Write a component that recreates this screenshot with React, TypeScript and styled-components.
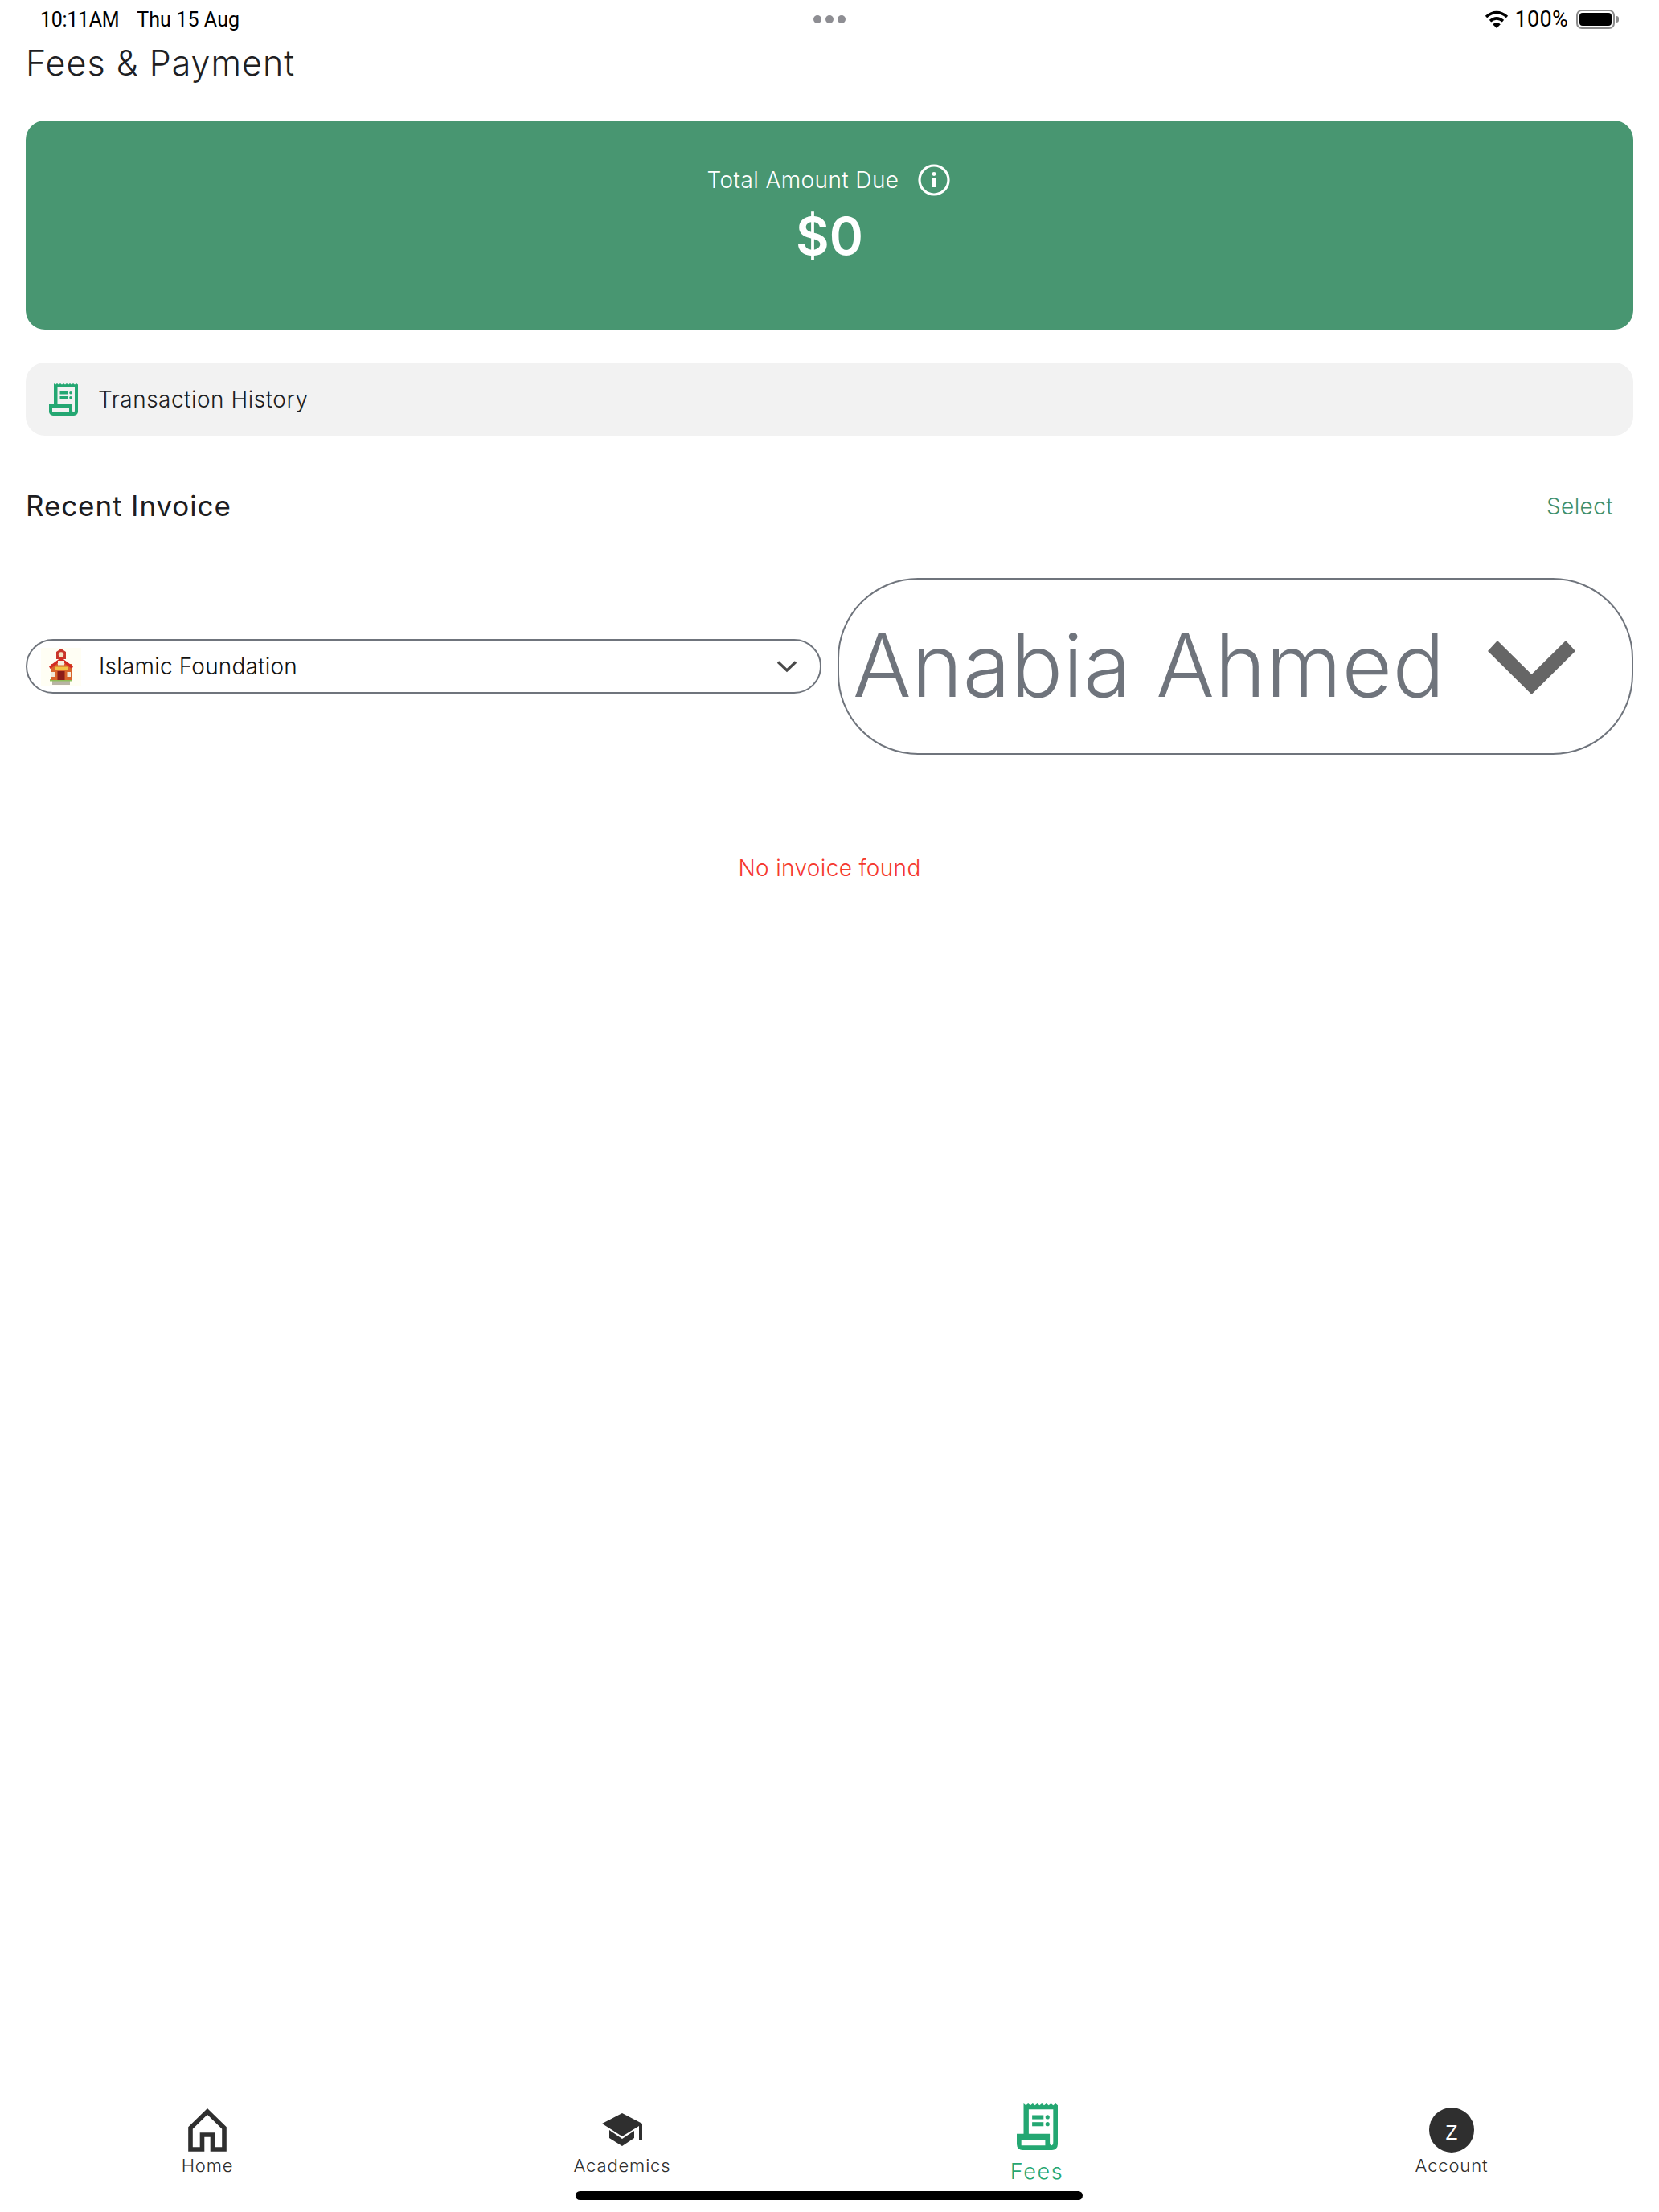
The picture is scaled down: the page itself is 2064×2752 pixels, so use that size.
import React from "react";
import styled, { createGlobalStyle } from "styled-components";

const FONT = `Inter, "Noto Sans", "Liberation Sans", sans-serif`;

const Global = createGlobalStyle`
  html, body { margin: 0; padding: 0; background: #fff; }
  * { box-sizing: border-box; }
`;

const Page = styled.div`
  width: 2064px;
  height: 2752px;
  position: relative;
  display: flex;
  flex-direction: column;
  font-family: ${FONT};
  background: #fff;
  overflow: hidden;
`;

const StatusBar = styled.div`
  height: 48px;
  display: grid;
  grid-template-columns: 1fr auto 1fr;
  align-items: center;
  padding: 0 50px;
  font-family: Roboto, ${FONT};
  font-size: 25px;
  color: #000;
`;
const StatusLeft = styled.div`
  display: flex;
  gap: 22px;
  letter-spacing: 0.1px;
`;
const Clock = styled.span`
  word-spacing: -6px;
  letter-spacing: -0.3px;
`;
const StatusDots = styled.div`
  display: flex;
  gap: 5px;
`;
const Dot = styled.span`
  width: 10px;
  height: 10px;
  border-radius: 50%;
  background: #8e8e93;
`;
const StatusRight = styled.div`
  display: flex;
  justify-content: flex-end;
  align-items: center;
  gap: 8px;
  padding-right: 5px;
`;
const Percent = styled.span`
  font-size: 27px;
  letter-spacing: 0.3px;
`;
const Battery = styled.span`
  width: 48px;
  height: 24px;
  border: 2px solid #8b8b8b;
  border-radius: 7px;
  padding: 2px;
  display: flex;
  margin-left: 2px;
  position: relative;
  &::before {
    content: "";
    flex: 1;
    background: #000;
    border-radius: 4px;
  }
  &::after {
    content: "";
    position: absolute;
    right: -7px;
    top: 6px;
    width: 3px;
    height: 8px;
    background: #8b8b8b;
    border-radius: 0 3px 3px 0;
  }
`;

const Content = styled.main`
  flex: 1;
  display: flex;
  flex-direction: column;
  padding: 0 32px;
`;
const Title = styled.h1`
  margin: 5px 0 0;
  height: 50px;
  line-height: 50px;
  font-size: 43px;
  font-weight: 300;
  letter-spacing: 1px;
  color: #1f1f24;
`;
const Banner = styled.section`
  margin-top: 47px;
  height: 260px;
  border-radius: 24px;
  background: #489671;
  color: #fff;
  display: flex;
  flex-direction: column;
  align-items: center;
  padding-top: 54px;
`;
const BannerRow = styled.div`
  display: flex;
  align-items: center;
  gap: 24px;
  height: 40px;
  margin-left: -2px;
  font-size: 28px;
  font-weight: 300;
  letter-spacing: 0.4px;
`;
const Amount = styled.div`
  margin-top: 15px;
  line-height: 70px;
  font-size: 64px;
  font-weight: 600;
`;
const HistoryRow = styled.div`
  margin-top: 41px;
  height: 91px;
  border-radius: 24px;
  background: #f2f2f2;
  display: flex;
  align-items: center;
  gap: 25px;
  padding-left: 29px;
  font-size: 28px;
  font-weight: 300;
  letter-spacing: 0.5px;
  color: #1d1d22;
`;
const SectionHead = styled.div`
  margin-top: 60px;
  height: 54px;
  display: flex;
  align-items: center;
  justify-content: space-between;
  padding-right: 25px;
`;
const SectionTitle = styled.h2`
  margin: 0;
  font-size: 35px;
  font-weight: 400;
  letter-spacing: 0.9px;
  color: #1d1d22;
`;
const SelectLink = styled.span`
  margin-top: 2px;
  font-size: 28px;
  font-weight: 300;
  letter-spacing: 0.4px;
  color: #3f8f6c;
`;
const Filters = styled.div`
  margin-top: 63px;
  display: grid;
  grid-template-columns: 990px 990px;
  gap: 20px;
  align-items: center;
`;
const SmallSelect = styled.div`
  height: 68px;
  border: 2px solid #6f747c;
  border-radius: 34px;
  display: flex;
  align-items: center;
  padding: 0 28px 0 17px;
  gap: 22px;
  font-size: 28px;
  font-weight: 300;
  letter-spacing: 0.2px;
  color: #111;
`;
const SelectText = styled.span`
  flex: 1;
`;
const BigSelect = styled.div`
  height: 220px;
  border: 2px solid #6f747c;
  border-radius: 100px;
  display: flex;
  align-items: center;
  padding: 0 70px 3px 17px;
  justify-content: space-between;
  font-size: 108px;
  font-weight: 300;
  letter-spacing: 0.25px;
  color: #6f747c;
`;
const BigChevronWrap = styled.span`
  display: flex;
  margin-top: 5px;
`;
const Empty = styled.p`
  margin: 123px 0 0;
  text-align: center;
  line-height: 36px;
  font-size: 28px;
  font-weight: 300;
  letter-spacing: 0.35px;
  color: #f5392f;
`;

const TabBar = styled.nav`
  height: 137px;
  display: grid;
  grid-template-columns: repeat(4, 516px);
`;
const Tab = styled.div`
  display: flex;
  flex-direction: column;
  align-items: center;
`;
const IconSlot = styled.div<{ $active?: boolean }>`
  height: ${(p) => (p.$active ? 62 : 70)}px;
  display: flex;
  align-items: center;
  justify-content: center;
`;
const TabLabel = styled.span<{ $active?: boolean }>`
  margin-top: ${(p) => (p.$active ? 10 : 0)}px;
  line-height: ${(p) => (p.$active ? 30 : 18)}px;
  font-size: ${(p) => (p.$active ? 27 : 22)}px;
  font-weight: 300;
  letter-spacing: ${(p) => (p.$active ? 1.6 : 0.85)}px;
  color: ${(p) => (p.$active ? "#24a772" : "#2d2d2d")};
`;
const Avatar = styled.div`
  width: 56px;
  height: 56px;
  border-radius: 50%;
  background: #2f2f2f;
  color: #fff;
  font-size: 32px;
  font-weight: 300;
  display: flex;
  align-items: center;
  justify-content: center;
`;
const HomeIndicator = styled.div`
  position: absolute;
  left: 716px;
  top: 2726px;
  width: 631px;
  height: 11px;
  border-radius: 6px;
  background: #000;
`;

const Receipt = ({ w, h }: { w: number; h: number }) => (
  <svg width={w} height={h} viewBox="0 0 36 40" preserveAspectRatio="none">
    <path
      fill="#24a772"
      fillRule="evenodd"
      d="M6 0 L8 1.6 L10 0 L12 1.6 L14 0 L16 1.6 L18 0 L20 1.6 L22 0 L24 1.6 L26 0 L28 1.6 L30 0 L32 1.6 L34 0 L36 1.6 V35 A5 5 0 0 1 31 40 H5 A5 5 0 0 1 0 35 V26 H6 Z
         M10.5 5 V26 H29 V33 Q29 36 30.5 36 Q32 36 32 33 V5 Z
         M4 31 V36 H25 V31 Z"
    />
    <rect x="13.5" y="10" width="10" height="3.5" fill="#24a772" />
    <rect x="13.5" y="16" width="10" height="3.5" fill="#24a772" />
    <circle cx="27" cy="11.7" r="1.8" fill="#24a772" />
    <circle cx="27" cy="17.7" r="1.8" fill="#24a772" />
  </svg>
);

const Wifi = () => (
  <svg width="30" height="22" viewBox="0 0 30 22">
    <path d="M2 8 Q15 -3 28 8" fill="none" stroke="#000" strokeWidth="3.6" />
    <path d="M7 13.2 Q15 6.5 23 13.2" fill="none" stroke="#000" strokeWidth="3.6" />
    <path d="M10.2 17.2 Q15 13 19.8 17.2 L15 22 Z" fill="#000" />
  </svg>
);

const Info = () => (
  <svg width="40" height="40" viewBox="0 0 40 40">
    <circle cx="20" cy="20" r="18" fill="none" stroke="#fff" strokeWidth="3.2" />
    <rect x="18" y="17" width="4" height="12" fill="#fff" />
    <circle cx="20" cy="12.5" r="2.4" fill="#fff" />
  </svg>
);

const School = () => (
  <svg width="50" height="47" viewBox="0 0 50 47">
    <rect width="50" height="47" fill="#fffef4" />
    <rect x="14" y="41" width="22" height="5" fill="#b9b4a6" />
    <rect x="11" y="39" width="28" height="2.5" fill="#8fbf5a" />
    <rect x="12" y="20" width="26" height="20" fill="#d9642b" />
    <path d="M19 5 L25 1 L31 5 V14 H19 Z" fill="#c9352a" />
    <circle cx="25" cy="8.5" r="3.2" fill="#f3e5c5" />
    <path d="M25 12 L10 23 L11.5 26 L25 16.5 L38.5 26 L40 23 Z" fill="#d22b22" />
    <rect x="21" y="16" width="8" height="5.5" fill="#f5eedd" />
    <rect x="17" y="23.5" width="16" height="3.5" fill="#f1c447" />
    <rect x="20.5" y="29" width="9" height="11" fill="#8c1d18" />
    <rect x="13" y="30" width="4.5" height="6" fill="#f2e9d8" />
    <rect x="32.5" y="30" width="4.5" height="6" fill="#f2e9d8" />
  </svg>
);

const SmallChevron = () => (
  <svg width="26" height="16" viewBox="0 0 26 16">
    <path d="M2 2.5 L13 13 L24 2.5" fill="none" stroke="#4a4a4a" strokeWidth="3.4" />
  </svg>
);

const BigChevron = () => (
  <svg width="109" height="67" viewBox="0 0 109 67">
    <path d="M0 13 L12 0 L54.5 42 L97 0 L109 13 L54.5 67 Z" fill="#666" />
  </svg>
);

const HomeIcon = () => (
  <svg width="48" height="54" viewBox="0 0 48 54">
    <path
      d="M3 51 V24.5 L24 4 L45 24.5 V51 H30.5 V33 H17.5 V51 Z"
      fill="none"
      stroke="#2f2f2f"
      strokeWidth="5.6"
      strokeLinejoin="miter"
    />
  </svg>
);

const CapIcon = () => (
  <svg width="51" height="42" viewBox="0 0 51 42">
    <path d="M0 13 L25 0 L50 13 V33 H46 V16 L25 29 Z" fill="#2f2f2f" />
    <path d="M9 21 L25 32 L40 22 V31 L25 41 L9 31 Z" fill="#2f2f2f" />
  </svg>
);

export default function App() {
  return (
    <Page>
      <Global />
      <StatusBar>
        <StatusLeft>
          <Clock>10:11 AM</Clock>
          <span>Thu 15 Aug</span>
        </StatusLeft>
        <StatusDots>
          <Dot />
          <Dot />
          <Dot />
        </StatusDots>
        <StatusRight>
          <Wifi />
          <Percent>100%</Percent>
          <Battery />
        </StatusRight>
      </StatusBar>
      <Content>
        <Title>Fees &amp; Payment</Title>
        <Banner>
          <BannerRow>
            <span>Total Amount Due</span>
            <Info />
          </BannerRow>
          <Amount>$0</Amount>
        </Banner>
        <HistoryRow>
          <Receipt w={36} h={40} />
          <span>Transaction History</span>
        </HistoryRow>
        <SectionHead>
          <SectionTitle>Recent Invoice</SectionTitle>
          <SelectLink>Select</SelectLink>
        </SectionHead>
        <Filters>
          <SmallSelect>
            <School />
            <SelectText>Islamic Foundation</SelectText>
            <SmallChevron />
          </SmallSelect>
          <BigSelect>
            <span>Anabia Ahmed</span>
            <BigChevronWrap>
              <BigChevron />
            </BigChevronWrap>
          </BigSelect>
        </Filters>
        <Empty>No invoice found</Empty>
      </Content>
      <TabBar>
        <Tab>
          <IconSlot>
            <HomeIcon />
          </IconSlot>
          <TabLabel>Home</TabLabel>
        </Tab>
        <Tab>
          <IconSlot>
            <CapIcon />
          </IconSlot>
          <TabLabel>Academics</TabLabel>
        </Tab>
        <Tab>
          <IconSlot $active>
            <Receipt w={51} h={58} />
          </IconSlot>
          <TabLabel $active>Fees</TabLabel>
        </Tab>
        <Tab>
          <IconSlot>
            <Avatar>z</Avatar>
          </IconSlot>
          <TabLabel>Account</TabLabel>
        </Tab>
      </TabBar>
      <HomeIndicator />
    </Page>
  );
}
